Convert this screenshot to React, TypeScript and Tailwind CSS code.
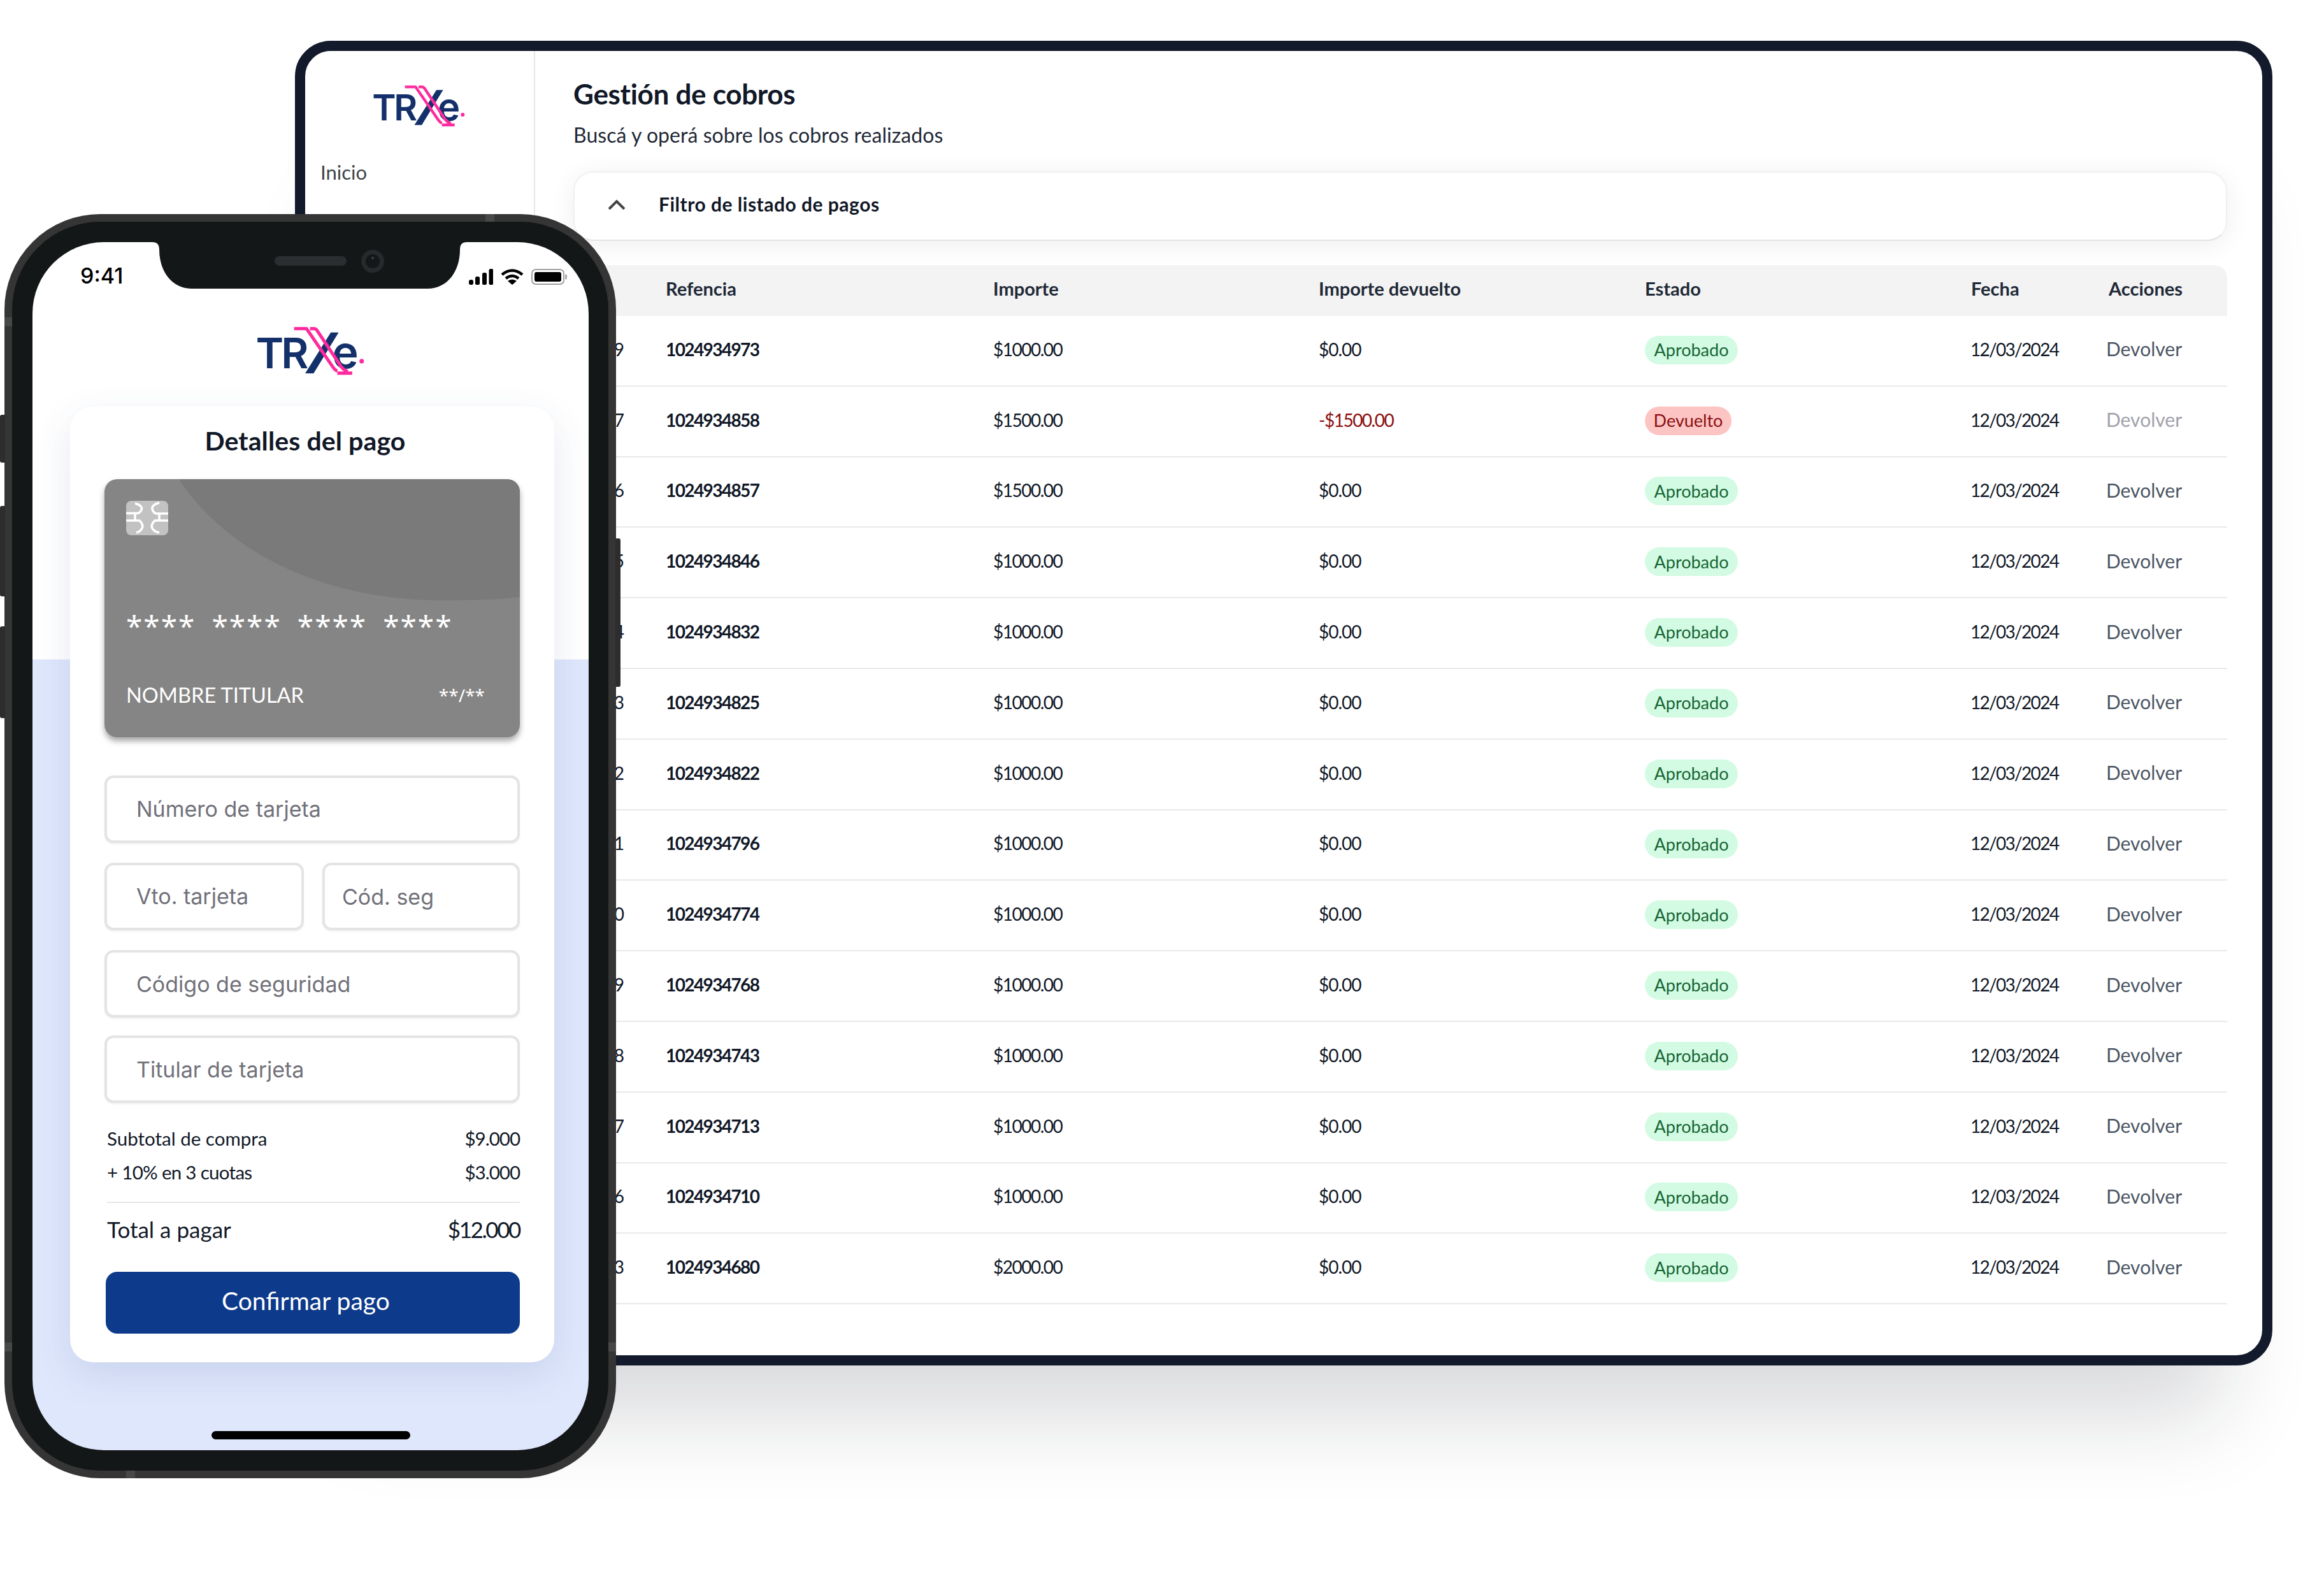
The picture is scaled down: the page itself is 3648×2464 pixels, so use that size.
const ROWS = [
  { id: "3489", ref: "1024934973", amount: "$1000.00" },
  { id: "3487", ref: "1024934858", amount: "$1500.00", refunded: true },
  { id: "3486", ref: "1024934857", amount: "$1500.00" },
  { id: "3485", ref: "1024934846", amount: "$1000.00" },
  { id: "3484", ref: "1024934832", amount: "$1000.00" },
  { id: "3483", ref: "1024934825", amount: "$1000.00" },
  { id: "3482", ref: "1024934822", amount: "$1000.00" },
  { id: "3481", ref: "1024934796", amount: "$1000.00" },
  { id: "3480", ref: "1024934774", amount: "$1000.00" },
  { id: "3479", ref: "1024934768", amount: "$1000.00" },
  { id: "3478", ref: "1024934743", amount: "$1000.00" },
  { id: "3477", ref: "1024934713", amount: "$1000.00" },
  { id: "3476", ref: "1024934710", amount: "$1000.00" },
  { id: "3473", ref: "1024934680", amount: "$2000.00" },
];

const GRID = "grid grid-cols-[145px_514px_511px_512px_512px_213px_188px] items-center";

function Logo({ className }: { className: string }) {
  return (
    <svg viewBox="130 50 450 300" className={className}>
      <text x="134" y="270" fontSize="170" fontWeight="600" fill="#14306b" className="font-['Inter']">T</text>
      <text x="236" y="270" fontSize="170" fontWeight="600" fill="#14306b" className="font-['Inter']">R</text>
      <text x="441" y="270" fontSize="180" fontWeight="600" fill="#14306b" className="font-['Inter']">e</text>
      <polygon points="435,124 471,124 368,293 329,293" fill="#14306b" stroke="#fff" strokeWidth="4" />
      <path d="M288 111 H338 L446 268 Q452 278 462 282 M352 111 H368 Q376 111 381 119 L476 262 Q486 276 504 284 M462 290 H522" fill="none" stroke="#ff2a9d" strokeWidth="13" />
      <circle cx="560" cy="242" r="9" fill="#ff2a9d" />
    </svg>
  );
}

function Field({ label, className = "" }: { label: string; className?: string }) {
  return (
    <div className={`flex h-[106px] items-center rounded-[14px] border-[4px] border-[#e4e4e7] bg-white shadow-[0_2px_3px_rgba(0,0,0,0.06)] font-['Inter'] text-[34px] text-[#71717a] ${className}`}>
      {label}
    </div>
  );
}

function Tablet() {
  return (
    <div className="ml-[463px] flex h-[2079px] w-[3104px] overflow-hidden rounded-[56px] border-[16px] border-[#121a2b] bg-white shadow-[0_160px_130px_-80px_rgba(17,24,39,0.16)]">
      <aside className="w-[361px] shrink-0 border-r-2 border-[#e5e7eb]">
        <Logo className="ml-[104px] mt-[36px] h-[100px] w-[150px]" />
        <div className="ml-[24px] mt-[34px] text-[31px] leading-[40px] text-[#3f4447]">Inicio</div>
      </aside>

      <main className="min-w-0 flex-1 pl-[60px] pr-[55px]">
        <h1 className="mt-[38px] text-[44px] font-bold leading-[58px] tracking-[-0.3px] text-[#111827]">Gestión de cobros</h1>
        <p className="mt-[16px] text-[32px] leading-[40px] tracking-[0.05px] text-[#1f2937]">Buscá y operá sobre los cobros realizados</p>

        <div className="mt-[37px] flex h-[109px] items-center rounded-[30px] border-2 border-[#f0f0f0] border-b-[#e4e4e4] bg-white pb-[6px] shadow-[0_6px_40px_rgba(0,0,0,0.07)]">
          <svg viewBox="0 0 28 16" className="ml-[52px] h-[16px] w-[28px]" fill="none" stroke="#444" strokeWidth="4">
            <path d="M2 15 L14 3 L26 15" />
          </svg>
          <span className="ml-[52px] text-[30px] font-bold tracking-[0.5px] text-[#111827]">Filtro de listado de pagos</span>
        </div>

        <div className={`${GRID} mt-[38px] h-[80px] rounded-t-[20px] bg-[#f3f3f3] pb-[6px] text-[29px] font-bold text-[#1f2937]`}>
          <span className="pl-[10px]">ID</span>
          <span>Refencia</span>
          <span>Importe</span>
          <span>Importe devuelto</span>
          <span>Estado</span>
          <span>Fecha</span>
          <span className="pl-[3px]">Acciones</span>
        </div>

        {ROWS.map((row) => (
          <div key={row.ref} className={`${GRID} h-[110.8px] border-b-2 border-[#e9e9ea] pb-[5px] text-[28px] text-[#111827]`}>
            <span className="pr-[65px] text-right">{row.id}</span>
            <span className="font-bold tracking-[-1.6px]">{row.ref}</span>
            <span className="tracking-[-1.5px]">{row.amount}</span>
            {row.refunded ? (
              <span className="tracking-[-1.5px] text-[#8b0f0f]">-{row.amount}</span>
            ) : (
              <span className="tracking-[-1px]">$0.00</span>
            )}
            <span>
              {row.refunded ? (
                <span className="mt-[3px] inline-flex h-[45px] w-[136px] items-center justify-center rounded-full bg-[#fdc4c4] text-[27px] text-[#8b0f0f]">Devuelto</span>
              ) : (
                <span className="mt-[3px] inline-flex h-[45px] w-[146px] items-center justify-center rounded-full bg-[#d3fbe3] text-[27px] text-[#166534]">Aprobado</span>
              )}
            </span>
            <span className="-ml-[1px] tracking-[-1.7px]">12/03/2024</span>
            <span className={`-ml-[1px] text-[30px] ${row.refunded ? "text-[#a1a1aa]" : "text-[#4b5563]"}`}>Devolver</span>
          </div>
        ))}
      </main>
    </div>
  );
}

function CreditCard() {
  return (
    <div className="relative h-[405px] overflow-hidden rounded-[20px] bg-[#858585] text-white shadow-[0_6px_10px_rgba(0,0,0,0.35)]">
      <svg viewBox="0 0 653 405" className="absolute inset-0 h-full w-full">
        <path d="M117 0 C190 110 340 196 557 190 Q610 190 653 185 V0 Z" fill="#7a7a7a" />
      </svg>
      <div className="relative flex h-full flex-col px-[34px]">
        <svg viewBox="0 0 66 54" className="mt-[34px] h-[54px] w-[66px]">
          <rect width="66" height="54" rx="8" fill="#c2c2c2" />
          <path d="M14 4 C22 6 26 10 24 14 C23 17 22 18 19 19.5 H0 M14 19.5 V31 M0 31 H21 C25 35 27 39 25 43 C23 47 20 49 16 50 M52 3 C44 5 40 9 41 13 C42 17 44 19 47 20 H66 M52 20 V31 M66 31 H45 C41 35 39 39 41 43 C43 47 47 49 52 50" fill="none" stroke="#fff" strokeWidth="3.6" />
        </svg>
        <div className="mt-[117px] flex gap-[25px] font-['Noto_Sans'] text-[46px] leading-[50px] tracking-[2px]">
          <span>****</span>
          <span>****</span>
          <span>****</span>
          <span>****</span>
        </div>
        <div className="mt-[63px] flex items-center justify-between pr-[21px]">
          <span className="text-[32.5px] leading-[42px]">NOMBRE TITULAR</span>
          <span className="font-['Noto_Sans'] text-[28px] leading-[42px]">**/**</span>
        </div>
      </div>
    </div>
  );
}

function Phone() {
  return (
    <div className="absolute left-[7px] top-[336px] h-[1984px] w-[960px] rounded-[150px] border-[12px] border-[#353535] bg-[#141718] p-[32px]">
      {/* side buttons */}
      <div className="absolute -left-[19px] top-[303px] h-[75px] w-[8px] rounded-l-[3px] bg-[#2d2d2d]" />
      <div className="absolute -left-[19px] top-[446px] h-[142px] w-[8px] rounded-l-[3px] bg-[#2d2d2d]" />
      <div className="absolute -left-[19px] top-[635px] h-[144px] w-[8px] rounded-l-[3px] bg-[#2d2d2d]" />
      <div className="absolute -right-[19px] top-[497px] h-[233px] w-[8px] rounded-r-[3px] bg-[#2d2d2d]" />
      {/* antenna bands */}
      <div className="absolute -top-[12px] left-[743px] h-[12px] w-[14px] bg-[#484848]" />
      <div className="absolute -left-[12px] top-[150px] h-[14px] w-[12px] bg-[#484848]" />
      <div className="absolute -right-[12px] top-[1759px] h-[14px] w-[12px] bg-[#484848]" />
      <div className="absolute -left-[12px] top-[1759px] h-[14px] w-[12px] bg-[#484848]" />
      <div className="absolute -bottom-[12px] left-[179px] h-[12px] w-[14px] bg-[#484848]" />

      <div className="relative h-[1896px] w-[873px] overflow-hidden rounded-[112px] bg-[linear-gradient(#fff_655px,#dfe7fc_655px)]">
        <svg viewBox="0 0 494 73" className="absolute left-[188px] top-0 h-[73px] w-[494px]">
          <path d="M0 0 C8 0 11 4 11 12 C11 45 30 73 62 73 H432 C464 73 483 45 483 12 C483 4 486 0 494 0 Z" fill="#141718" />
          <rect x="192" y="22" width="113" height="15" rx="7.5" fill="#2a2e30" />
          <circle cx="346" cy="30" r="18" fill="#262a2c" />
          <circle cx="346" cy="30" r="11" fill="#141718" />
          <circle cx="346" cy="25" r="2" fill="#3a4044" />
        </svg>

        <div className="flex h-[67px] items-end justify-between pl-[75px] pr-[33px]">
          <span className="translate-y-[6px] font-['Inter'] text-[34px] font-medium leading-[40px] text-black">9:41</span>
          <div className="flex items-center gap-[12px]">
            <svg viewBox="0 0 38 25" className="h-[25px] w-[38px]" fill="#000">
              <rect x="0" y="17" width="7" height="8" rx="3" />
              <rect x="10" y="12" width="7" height="13" rx="2.5" />
              <rect x="21" y="6" width="7" height="19" rx="2.5" />
              <rect x="31.5" y="0" width="7" height="25" rx="2.5" />
            </svg>
            <svg viewBox="0 0 36 25" className="h-[25px] w-[36px]" fill="none" stroke="#000" strokeWidth="4.5">
              <path d="M2 9 Q18 -4 34 9" />
              <path d="M8 15 Q18 7 28 15" />
              <path d="M18 25 L11 19 Q18 14 25 19 Z" fill="#000" stroke="none" />
            </svg>
            <svg viewBox="0 0 57 25" className="h-[25px] w-[57px]">
              <rect x="1" y="1" width="50" height="23" rx="6" fill="none" stroke="#a0a0a0" strokeWidth="2" />
              <rect x="5" y="5" width="42" height="15" rx="3" fill="#000" />
              <rect x="53" y="8.5" width="3" height="8" rx="1.5" fill="#a8a8a8" />
            </svg>
          </div>
        </div>

        <Logo className="ml-[349px] mt-[45px] h-[117px] w-[175.5px]" />

        <div className="ml-[59px] mt-[29px] h-[1500px] w-[760px] rounded-[36px] bg-white px-[54px] shadow-[0_20px_60px_rgba(50,70,130,0.12)]">
          <h2 className="flex h-[114px] items-center justify-center pb-[7px] pr-[22px] text-[41px] font-bold tracking-[0.1px] text-[#111827]">Detalles del pago</h2>
          <CreditCard />
          <div className="mt-[60px] flex flex-col">
            <Field label="Número de tarjeta" className="pb-[2px] pl-[46px]" />
            <div className="mt-[31px] flex gap-[29px]">
              <Field label="Vto. tarjeta" className="w-[313px] pb-[2px] pl-[46px]" />
              <Field label="Cód. seg" className="flex-1 pl-[27px]" />
            </div>
            <Field label="Código de seguridad" className="mt-[31px] pl-[46px]" />
            <Field label="Titular de tarjeta" className="mt-[28px] pl-[46px]" />
          </div>

          <div className="mt-[30px] flex h-[53px] items-center justify-between pl-[4px] text-[29.5px] text-[#111827]">
            <span>Subtotal de compra</span>
            <span className="tracking-[-1px]">$9.000</span>
          </div>
          <div className="flex h-[53px] items-center justify-between pl-[4px] text-[29.5px] text-[#111827]">
            <span className="tracking-[-0.7px]">+ 10% en 3 cuotas</span>
            <span className="tracking-[-1px]">$3.000</span>
          </div>
          <div className="ml-[4px] mt-[19px] h-[2px] bg-[#e5e7eb]" />
          <div className="mt-[13px] flex h-[60px] items-center justify-between pb-[4px] pl-[4px] text-[35px] text-[#111827]">
            <span>Total a pagar</span>
            <span className="tracking-[-2.4px]">$12.000</span>
          </div>
          <button className="ml-[2px] mt-[35px] flex h-[97px] w-[650px] items-center justify-center rounded-[18px] bg-[#0d3a8a] pb-[7px] pr-[22px] text-[39px] text-white">
            Confirmar pago
          </button>
        </div>

        <div className="absolute left-[281px] top-[1866px] h-[13px] w-[312px] rounded-full bg-black" />
      </div>
    </div>
  );
}

export default function App() {
  return (
    <div className="relative h-[2464px] w-[3648px] overflow-hidden bg-white pt-[64px] font-['Lato',sans-serif]">
      <Tablet />
      <Phone />
    </div>
  );
}
